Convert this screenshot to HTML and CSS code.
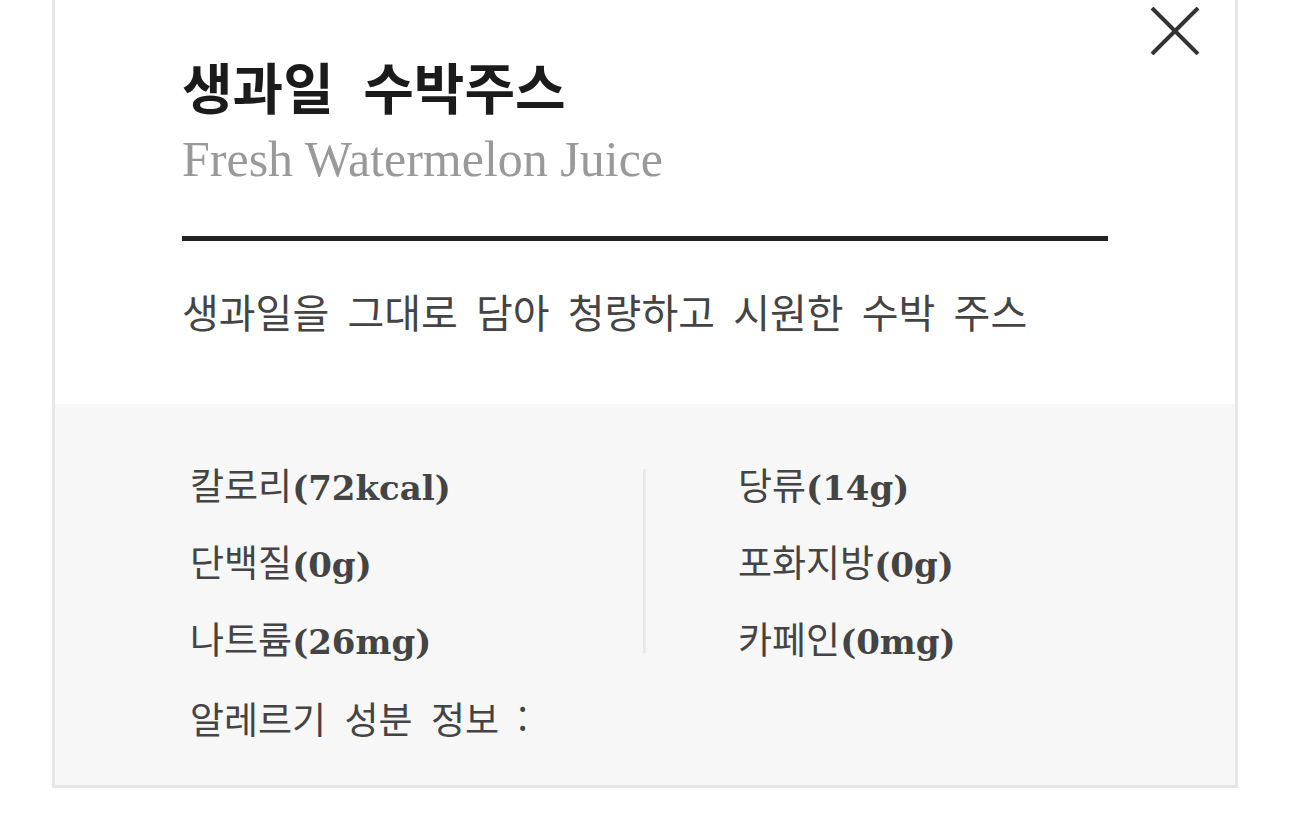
FILE: index.html
```html
<!DOCTYPE html>
<html lang="ko">
<head>
<meta charset="utf-8">
<title>생과일 수박주스</title>
<link rel="stylesheet" href="styles.css">
</head>
<body>
<div class="panel">
  <button class="close" aria-label="닫기">
    <svg viewBox="0 0 50 48" width="50" height="48"><path d="M2 1 L48 47 M48 1 L2 47" stroke="#333" stroke-width="4" fill="none"/></svg>
  </button>
  <div class="head">
    <h1 class="title">생과일 수박주스</h1>
    <p class="subtitle">Fresh Watermelon Juice</p>
    <div class="rule"></div>
    <p class="desc">생과일을 그대로 담아 청량하고 시원한 수박 주스</p>
  </div>
  <div class="info">
    <div class="cols">
      <ul class="col col-left">
        <li>칼로리<b>(72kcal)</b></li>
        <li>단백질<b>(0g)</b></li>
        <li>나트륨<b>(26mg)</b></li>
      </ul>
      <ul class="col col-right">
        <li>당류<b>(14g)</b></li>
        <li>포화지방<b>(0g)</b></li>
        <li>카페인<b>(0mg)</b></li>
      </ul>
    </div>
    <p class="allergy">알레르기 성분 정보 :</p>
  </div>
</div>
</body>
</html>
```
FILE: styles.css
```css
html, body {
  margin: 0;
  padding: 0;
  background: #fff;
}
body {
  font-family: "Noto Sans CJK KR", "Noto Sans", sans-serif;
  color: #444;
}
.panel {
  position: relative;
  margin-left: 52px;
  width: 1180px;
  border: 3px solid #e6e6e6;
  border-top: 0;
  background: #fff;
}
.close {
  position: absolute;
  top: 7px;
  right: 35px;
  width: 50px;
  height: 48px;
  padding: 0;
  border: 0;
  background: transparent;
  display: block;
}
.close svg { display: block; }
.head {
  padding: 53px 127px 68px 127px;
}
.title {
  margin: 0;
  font-size: 55px;
  line-height: 64px;
  font-weight: 700;
  color: #1b1b1b;
  word-spacing: 14px;
}
.subtitle {
  margin: 12px 0 0;
  font-family: "Liberation Serif", serif;
  font-size: 50px;
  line-height: 60px;
  color: #999;
}
.rule {
  margin-top: 47px;
  height: 5px;
  background: #222;
}
.desc {
  margin: 45px 0 0;
  font-size: 40px;
  line-height: 50px;
  color: #444;
  word-spacing: 7px;
}
.info {
  background: #f7f7f7;
  padding: 65px 0 52px 135px;
}
.cols {
  display: flex;
}
.col {
  list-style: none;
  margin: 0;
  padding: 0;
  display: flex;
  flex-direction: column;
  gap: 47px;
}
.col-left { width: 453px; }
.col-right {
  border-left: 3px solid #e8e8e8;
  padding-left: 92px;
}
.col li, .allergy {
  font-size: 37px;
  line-height: 30px;
  height: 30px;
  white-space: nowrap;
}
.col b {
  font-family: "DejaVu Serif", serif;
  font-weight: 700;
  font-size: 34px;
  line-height: 30px;
}
.allergy {
  margin: 50px 0 0;
  word-spacing: 8px;
}
```
